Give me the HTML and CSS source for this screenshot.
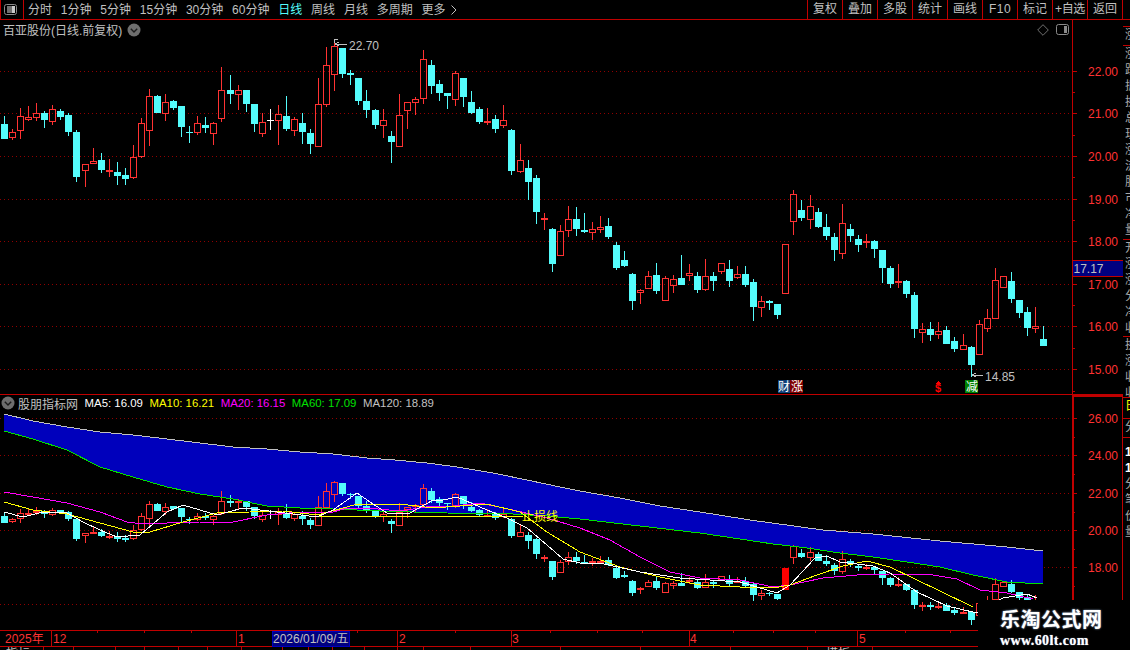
FILE: index.html
```html
<!DOCTYPE html>
<html lang="zh-CN">
<head>
<meta charset="utf-8">
<title>百亚股份 日线</title>
<link rel="stylesheet" href="styles.css">
</head>
<body>
<div class="app">
  <header class="toolbar">
    <button class="tool-toggle" aria-label="切换">
      <svg class="panel-icon" viewBox="0 0 13 12" width="13" height="12"><rect x="0.5" y="0.5" width="12" height="10" rx="2" fill="none" stroke="#8a8a8a"/><rect x="3" y="2" width="5" height="7" fill="#707070"/><rect x="8" y="2" width="3" height="7" fill="#c8c8c8"/></svg>
    </button>
    <nav class="periods">
      <a>分时</a><a>1分钟</a><a>5分钟</a><a>15分钟</a><a>30分钟</a><a>60分钟</a><a class="active">日线</a><a>周线</a><a>月线</a><a>多周期</a>
      <a class="more">更多<svg viewBox="0 0 6 10" width="6" height="10"><path d="M0.5 0.5 5 5 0.5 9.5" fill="none" stroke="#c0c0c0"/></svg></a>
    </nav>
    <div class="actions">
      <a>复权</a><a>叠加</a><a>多股</a><a>统计</a><a>画线</a><a class="latin">F10</a><a>标记</a><a class="tight">+自选</a><a>返回</a>
    </div>
  </header>

  <div class="workspace">
    <div class="charts">
      <section class="panel panel-upper">
        <svg id="upper" class="plot" viewBox="0 20 1123 374" width="1123" height="374" shape-rendering="crispEdges">
          <g id="upper-grid"></g>
          <g id="upper-candles"></g>
          <g class="notes">
            <path class="arrow" d="M334 39h4M334 39v4M335 44h12M335 44l4-2M335 44l4 2"/>
            <text class="note" x="349" y="49.5">22.70</text>
            <path class="arrow" d="M972 375h11M972 375l4-2M972 375l4 2"/>
            <text class="note" x="985" y="380.5">14.85</text>
            <rect class="badge-blue" x="778" y="380" width="12" height="13"/>
            <rect class="badge-red" x="790" y="380" width="13" height="13"/>
            <rect class="badge-green" x="965" y="380" width="13" height="13"/>
            <text class="badge-text" x="778" y="391">财</text>
            <text class="badge-text" x="791" y="391">涨</text>
            <text class="badge-text" x="966" y="391">减</text>
            <path class="dollar-tip" d="M938 381l-3 3h6z"/>
            <text class="dollar" x="935" y="392">$</text>
          </g>
          <g id="upper-axis"></g>
          <rect class="tag" x="1073" y="261" width="50" height="15"/>
          <path class="tag-edge" d="M1072 260.5H1123M1072 276.5H1123"/>
          <text class="tag-text" x="1073.5" y="273">17.17</text>
        </svg>
        <div class="panel-head">
          <div class="panel-title">
            <span>百亚股份(日线.前复权)</span>
            <svg class="chev" viewBox="0 0 14 14" width="14" height="14"><circle cx="7" cy="7" r="6.5" fill="#6e6e6e"/><path d="M3.8 5.8 7 9 10.2 5.8" fill="none" stroke="#1c1c1c" stroke-width="1.4"/></svg>
          </div>
          <div class="panel-tools">
            <svg viewBox="0 0 12 12" width="12" height="12"><path d="M6 0.7 11.3 6 6 11.3 0.7 6z" fill="none" stroke="#707070"/></svg>
            <svg viewBox="0 0 13 12" width="13" height="12"><rect x="0.5" y="0.5" width="12" height="10" rx="2" fill="none" stroke="#8a8a8a"/><rect x="8" y="2" width="3" height="7" fill="#8a8a8a"/></svg>
          </div>
        </div>
      </section>

      <section class="panel panel-lower">
        <svg id="lower" class="plot" viewBox="0 395 1123 235" width="1123" height="235" shape-rendering="crispEdges">
          <g id="lower-grid"></g>
          <polygon id="ma-band" class="band"></polygon>
          <g id="lower-candles"></g>
          <g id="lower-lines"></g>
          <text class="stop-label" x="522" y="520.5">止损线</text>
          <g id="lower-axis"></g>
        </svg>
        <div class="legend">
          <svg class="chev" viewBox="0 0 14 14" width="14" height="14"><circle cx="7" cy="7" r="6.5" fill="#6e6e6e"/><path d="M3.8 5.8 7 9 10.2 5.8" fill="none" stroke="#1c1c1c" stroke-width="1.4"/></svg>
          <span class="legend-name">股朋指标网</span>
          <span class="ma ma5">MA5: 16.09</span>
          <span class="ma ma10">MA10: 16.21</span>
          <span class="ma ma20">MA20: 16.15</span>
          <span class="ma ma60">MA60: 17.09</span>
          <span class="ma ma120">MA120: 18.89</span>
        </div>
      </section>

      <div class="date-axis">
        <svg id="dates" viewBox="0 630 1123 20" width="1123" height="20" shape-rendering="crispEdges">
          <g id="date-ticks"></g>
          <text class="date-label" x="5" y="642.5">2025年</text>
          <text class="date-label" x="53" y="642.5">12</text>
          <text class="date-label" x="238" y="642.5">1</text>
          <rect class="date-box" x="272" y="631" width="77" height="15"/>
          <text class="date-current" x="273" y="642.5">2026/01/09/五</text>
          <text class="date-label" x="399" y="642.5">2</text>
          <text class="date-label" x="512" y="642.5">3</text>
          <text class="date-label" x="690" y="642.5">4</text>
          <text class="date-label" x="859" y="642.5">5</text>
          <text class="date-sub" x="6" y="658">指标</text>
          <text class="date-sub" x="826" y="658">模板</text>
        </svg>
      </div>
    </div>

    <aside class="strip">
      <div class="cell c1"></div>
      <div class="cell c2"><p>涨</p></div>
      <div class="cell c3"><p>涨</p><p>跌</p><p>振</p><p>换</p><p>总</p><p>现</p><p>涨</p><p>流</p><p>股</p><p>市</p><p>净</p><p>量</p></div>
      <div class="cell c4"><p>开</p><p>涨</p><p>涨</p><p>分</p><p>净</p><p>收</p></div>
      <div class="cell c5"><p>换</p><p>涨</p><p>收</p><p>收</p></div>
      <div class="cell c6"><p class="mark">日</p></div>
      <div class="cell c7"><p>分</p></div>
      <div class="cell c8"><p class="bright">1</p><p class="bright">1</p><p>分</p><p>笔</p><p>价</p><p>量</p></div>
    </aside>
  </div>

  <div class="logo">
    <span class="logo-name">乐淘公式网</span>
    <span class="logo-url">www.60lt.com</span>
  </div>
</div>
<script src="chart.js"></script>
</body>
</html>
```

FILE: styles.css
```css
* { box-sizing: border-box; }

html, body {
  margin: 0;
  height: 100%;
  background: #000;
  overflow: hidden;
}

body {
  font-family: "Liberation Sans", "Noto Sans CJK SC", sans-serif;
  font-size: 12px;
  color: #c0c0c0;
}

.app {
  position: relative;
  display: flex;
  flex-direction: column;
  width: 1130px;
  height: 650px;
  overflow: hidden;
}

/* toolbar */
.toolbar {
  display: flex;
  flex: 0 0 20px;
  align-items: stretch;
  border-left: 1px solid #c00000;
  border-bottom: 1px solid #c00000;
}

.tool-toggle {
  display: flex;
  align-items: center;
  justify-content: center;
  width: 23px;
  padding: 0 3px 0 0;
  background: none;
  border: 0;
  border-right: 1px solid #c00000;
}

.periods {
  display: flex;
  align-items: center;
  gap: 8.8px;
  padding-left: 4px;
  flex: 1;
}

.periods a,
.actions a {
  white-space: nowrap;
  line-height: 18px;
}

.periods .active { color: #54fcfc; }

.more {
  display: flex;
  align-items: center;
  gap: 5px;
}

.actions {
  display: flex;
  margin-right: 7px;
  border-left: 1px solid #c00000;
}

.actions a {
  flex: 0 0 35px;
  text-align: center;
  border-right: 1px solid #c00000;
}

.actions .latin { letter-spacing: 0.5px; }
.actions .tight { letter-spacing: -0.3px; }

/* workspace */
.workspace {
  display: flex;
  flex: 1;
  min-height: 0;
}

.charts {
  display: flex;
  flex-direction: column;
  flex: 0 0 1123px;
}

.panel {
  position: relative;
  flex: none;
}

.panel-upper {
  height: 375px;
  border-bottom: 1px solid #c00000;
}

.panel-lower { height: 235px; }

.plot { display: block; }

.panel-head {
  position: absolute;
  top: 1px;
  left: 3px;
  width: 1066px;
  display: flex;
  justify-content: space-between;
  align-items: center;
  height: 17px;
}

.panel-title,
.panel-tools {
  display: flex;
  align-items: center;
}

.panel-title { gap: 5px; }
.panel-tools { gap: 7px; }

.legend {
  position: absolute;
  top: 0;
  left: 1px;
  display: flex;
  align-items: center;
  height: 16px;
  font-size: 11.4px;
}

.legend-name { margin-left: 3px; font-size: 12px; }
.ma { margin-left: 6.6px; white-space: nowrap; }
.ma5 { color: #ffffff; }
.ma10 { color: #ffff00; }
.ma20 { color: #ff00ff; }
.ma60 { color: #00e000; }
.ma120 { color: #c0c0c0; }

.date-axis { flex: 0 0 20px; overflow: hidden; }

/* svg parts */
text { font-family: "Liberation Sans", "Noto Sans CJK SC", sans-serif; font-size: 12px; }

.axis-label { fill: #ff3232; }
.axis-line { stroke: #c00000; fill: none; }
.axis-heavy { stroke: #c00000; stroke-width: 2; fill: none; }
.grid-line { stroke: #900000; stroke-dasharray: 1 3; shape-rendering: auto; }

.candle-up { fill: none; stroke: #ff3232; }
.candle-down { fill: #54fcfc; }
.candle-mark { fill: #ffffff; }
.candle-solid { fill: #ff0000; }
.wick-up { fill: #ff3232; }
.wick-down { fill: #54fcfc; }

.band { fill: #0000bc; }

.ma-line { fill: none; stroke-width: 1; }
.line-ma5 { stroke: #ffffff; }
.line-ma10 { stroke: #ffff00; }
.line-ma20 { stroke: #ff00ff; }
.line-ma60 { stroke: #00e000; }
.line-ma120 { stroke: #c0c0c0; }
.line-stop { stroke: #ffff00; }

.stop-label { fill: #ffff00; }

.note { fill: #c0c0c0; }
.arrow { fill: none; stroke: #c0c0c0; }

.badge-blue { fill: #0f3f78; }
.badge-red { fill: #800000; }
.badge-green { fill: #008000; }
.badge-text { fill: #ffffff; }
.dollar { fill: #ff0000; font-weight: bold; font-size: 11px; }
.dollar-tip { fill: #ff0000; }

.tag { fill: #000080; }
.tag-edge { stroke: #c00000; fill: none; }
.tag-text { fill: #c0c0c0; }

.date-box { fill: #000080; stroke: #0000c0; }
.date-label { fill: #ff3232; }
.date-current { fill: #c0c0c0; font-size: 12px; }
.date-sub { fill: #c0c0c0; }

/* right strip, cut off by the window */
.strip {
  flex: 0 0 7px;
  display: flex;
  flex-direction: column;
  overflow: hidden;
}

.cell {
  flex: none;
  padding-left: 2px;
  border-bottom: 1px solid #c00000;
  overflow: hidden;
}

.cell p {
  margin: 0;
  width: 12px;
  line-height: 16px;
  color: #a8a8a8;
}

.c1 { height: 7px; }
.c2 { height: 19px; }
.c3 { height: 194px; }
.c4 { height: 97px; }
.c5 { height: 61px; }
.c6 { height: 21px; }
.c7 { height: 19px; }
.c8 { height: 212px; border-bottom: 0; padding-top: 6px; }

.cell .mark { color: #ffff00; }
.cell .bright { color: #ffffff; font-weight: bold; }

/* site stamp over the corner of the chart */
.logo {
  position: absolute;
  left: 978px;
  top: 600px;
  width: 152px;
  height: 50px;
  background: #000;
  display: flex;
  flex-direction: column;
  align-items: flex-start;
  padding-left: 22px;
  color: #fff;
}

.logo-name {
  margin-top: 6px;
  font-family: "Noto Sans CJK SC", sans-serif;
  font-weight: 700;
  font-size: 20px;
  line-height: 26px;
  letter-spacing: 0.5px;
  text-shadow: 0 0 2px #9fb8d8;
}

.logo-url {
  margin-top: 1px;
  font-family: "Liberation Serif", serif;
  font-weight: 700;
  font-size: 14px;
  line-height: 15px;
  letter-spacing: 0.4px;
  text-shadow: 0 0 1px #9fb8d8;
}
```

FILE: chart.js
```js
// [high, bodyTop, bodyBottom, low, kind] in page pixels of the upper panel.
// kind: r = rising (hollow red), c = falling (cyan), w = white cross, f = flat red, s = rising, solid in the lower panel
var BARS = [
[116,124,139,139,'c'],[129,132,138,140,'r'],[108,116,131,139,'r'],[106,117,120,121,'r'],[103,113,118,121,'r'],
[111,113,120,128,'c'],[105,109,122,125,'r'],[109,111,117,120,'c'],[113,115,132,136,'c'],[130,132,177,182,'c'],
[164,164,171,187,'r'],[148,161,164,164,'r'],[153,160,170,173,'c'],[159,170,172,177,'f'],[162,172,176,185,'c'],
[168,175,179,185,'c'],[145,157,178,179,'r'],[118,123,157,158,'r'],[89,96,131,146,'r'],[95,96,113,113,'c'],
[94,102,114,121,'r'],[100,101,108,110,'c'],[106,106,127,137,'c'],[126,132,133,143,'c'],[116,123,133,135,'r'],
[117,125,128,133,'c'],[122,123,134,145,'r'],[67,90,119,122,'r'],[75,90,94,104,'c'],[85,90,95,110,'r'],
[90,90,104,112,'c'],[104,104,124,132,'c'],[113,122,134,137,'r'],[109,120,121,130,'w'],[105,114,121,145,'r'],
[96,116,129,131,'c'],[117,119,131,136,'r'],[113,123,132,144,'c'],[129,133,144,154,'c'],[78,104,147,147,'r'],
[47,65,105,107,'r'],[43,46,75,91,'r'],[48,48,74,78,'c'],[70,73,75,85,'c'],[78,78,101,105,'c'],
[90,101,110,118,'c'],[109,110,125,129,'c'],[109,120,126,138,'r'],[131,136,142,163,'c'],[94,115,147,147,'r'],
[102,102,111,129,'r'],[97,99,103,115,'r'],[50,59,99,104,'r'],[60,65,86,94,'c'],[80,84,93,101,'c'],
[93,93,96,109,'c'],[71,73,100,106,'r'],[78,78,97,107,'c'],[91,102,113,114,'c'],[107,109,122,124,'c'],
[108,121,122,125,'f'],[115,119,129,133,'c'],[105,120,126,128,'r'],[129,130,171,175,'c'],[144,160,172,173,'r'],
[160,168,182,200,'c'],[175,178,212,224,'c'],[213,218,220,230,'f'],[228,229,264,272,'c'],[225,231,256,256,'r'],
[206,219,231,237,'r'],[207,219,229,236,'c'],[213,230,232,233,'c'],[222,229,233,240,'r'],[216,227,230,233,'r'],
[218,226,237,239,'c'],[242,245,268,270,'c'],[251,260,266,267,'c'],[273,274,301,310,'c'],[289,290,293,304,'r'],
[271,276,289,289,'r'],[263,275,291,294,'c'],[276,278,301,301,'r'],[275,279,286,293,'r'],[255,278,285,285,'c'],
[264,273,276,281,'r'],[272,276,290,293,'c'],[259,276,290,291,'r'],[272,276,281,291,'c'],[263,263,272,274,'r'],
[260,269,281,287,'c'],[266,274,278,279,'r'],[266,274,285,287,'c'],[279,282,307,321,'c'],[296,301,308,317,'r'],
[300,301,303,310,'c'],[304,304,315,319,'c'],[244,244,294,294,'s'],[190,194,222,235,'r'],[200,210,218,221,'c'],
[195,206,220,229,'r'],[208,212,227,228,'c'],[214,227,236,240,'c'],[233,237,250,261,'c'],[204,223,254,259,'r'],
[224,229,236,242,'c'],[235,239,245,252,'c'],[234,241,243,248,'r'],[240,241,249,258,'c'],[250,250,268,283,'c'],
[266,268,284,288,'c'],[264,281,283,288,'r'],[280,281,294,298,'c'],[292,295,329,338,'c'],[323,329,333,343,'r'],
[322,329,335,341,'c'],[322,331,335,339,'r'],[326,330,344,344,'c'],[337,341,349,352,'c'],[334,345,350,350,'r'],
[346,347,365,377,'c'],[320,324,355,355,'r'],[309,318,329,332,'r'],[268,280,319,319,'r'],[276,276,288,288,'r'],
[272,281,299,303,'c'],[300,300,313,318,'c'],[307,312,328,336,'c'],[307,326,329,333,'r'],[326,339,346,346,'c']
];

var LINES = {
  ma120: [[4,414],[33,421],[67,427],[100,432],[133,435],[167,439],[200,443],[233,447],[267,449],[300,452],[333,454],[367,458],[395,460],[427,463],[457,467],[493,473],[527,480],[560,487],[580,491],[620,498],[660,506],[700,512],[750,520],[823,530],[873,534],[940,541],[1007,547],[1043,551]],
  ma60: [[4,431],[33,439],[67,450],[100,467],[133,477],[167,487],[200,494],[233,499],[267,506],[300,508],[333,509],[380,511],[447,513],[513,514],[547,516],[580,519],[640,526],[700,533],[740,539],[773,544],[807,548],[840,553],[873,557],[907,562],[940,567],[973,575],[1007,582],[1043,584]],
  ma20: [[4,492],[33,497],[67,503],[100,512],[127,522],[143,524],[167,523],[200,522],[233,522],[267,515],[300,512],[333,512],[347,508],[367,508],[400,511],[433,506],[447,507],[480,503],[513,510],[547,518],[580,528],[610,540],[640,557],[670,572],[700,578],[740,580],[773,587],[790,585],[823,578],[857,575],[890,574],[933,575],[957,579],[980,590],[1007,593],[1033,599]],
  ma10: [[4,502],[33,510],[67,514],[100,523],[133,532],[150,532],[183,522],[217,513],[250,512],[283,511],[317,515],[347,507],[357,504],[400,504],[433,508],[487,504],[520,512],[547,532],[580,552],[620,567],[660,577],[700,585],[740,587],[773,588],[790,585],[817,575],[843,566],[867,561],[890,567],[917,580],[940,591],[973,607]],
  ma5: [[4,512],[23,517],[43,512],[67,513],[83,522],[100,530],[117,537],[140,535],[167,512],[183,505],[217,515],[243,508],[277,512],[317,517],[333,510],[357,493],[370,502],[387,513],[410,513],[433,500],[443,500],[457,497],[487,510],[507,518],[527,528],[547,545],[563,559],[580,563],[600,563],[640,572],[680,578],[740,582],[777,593],[790,585],[815,558],[827,556],[840,562],[873,566],[890,573],[917,592],[947,606],[977,613],[1003,598],[1027,594],[1037,598]]
};

var SVG_NS = 'http://www.w3.org/2000/svg';

function el(parent, name, attrs, text) {
  var node = document.createElementNS(SVG_NS, name);
  for (var key in attrs) node.setAttribute(key, attrs[key]);
  if (text) node.textContent = text;
  parent.appendChild(node);
  return node;
}

function barX(i) { return Math.round(4 + 8.055 * i); }

function toLower(y) { return Math.round(482.3 + (y - 46) * 0.4325); }

function drawBars(group, mapY, lower) {
  BARS.forEach(function (b, i) {
    var x = barX(i);
    var high = mapY(b[0]), top = mapY(b[1]), bottom = mapY(b[2]), low = mapY(b[3]), kind = b[4];
    var up = kind === 'r' || kind === 's' || kind === 'f';
    var wick = kind === 'w' ? 'candle-mark' : up ? 'wick-up' : 'wick-down';
    if (kind === 's' && lower) {
      el(group, 'rect', { x: x - 3, y: top, width: 7, height: bottom - top, 'class': 'candle-solid' });
      return;
    }
    if (high < top) el(group, 'rect', { x: x, y: high, width: 1, height: top - high, 'class': wick });
    if (low > bottom) el(group, 'rect', { x: x, y: bottom, width: 1, height: low - bottom, 'class': wick });
    if (up && kind !== 'f') {
      el(group, 'rect', { x: x - 2.5, y: top + 0.5, width: 6, height: Math.max(bottom - top - 1, 1), 'class': 'candle-up' });
    } else if (kind === 'f') {
      el(group, 'rect', { x: x - 3, y: top, width: 7, height: Math.max(bottom - top, 2), 'class': 'wick-up' });
    } else {
      el(group, 'rect', { x: x - 3, y: top, width: 7, height: Math.max(bottom - top, 1), 'class': kind === 'w' ? 'candle-mark' : 'candle-down' });
    }
  });
}

function drawScale(gridId, axisId, rows, topY, bottomY, halfStep) {
  var grid = document.getElementById(gridId);
  var axis = document.getElementById(axisId);
  el(axis, 'path', { d: 'M1072.5 ' + topY + 'V' + bottomY, 'class': 'axis-line' });
  rows.forEach(function (row, i) {
    var y = Math.round(row[1]);
    el(grid, 'line', { x1: 0, x2: 1072, y1: y + 0.5, y2: y + 0.5, 'class': 'grid-line' });
    el(axis, 'path', { d: 'M1072 ' + (y + 0.5) + 'h5', 'class': 'axis-line' });
    // a row with no text sits behind the site stamp
    if (row[0]) el(axis, 'text', { x: 1088, y: y + 5, 'class': 'axis-label' }, row[0]);
    if (i < rows.length - 1 || halfStep) {
      var next = i < rows.length - 1 ? rows[i + 1][1] : row[1] + halfStep * 2;
      var half = Math.round((row[1] + next) / 2);
      if (half < bottomY) el(axis, 'path', { d: 'M1072 ' + (half + 0.5) + 'h3', 'class': 'axis-line' });
    }
  });
}

function drawLine(group, name, pts) {
  el(group, 'polyline', { points: pts.join(' '), 'class': 'ma-line line-' + name });
}

function drawDateTicks() {
  var g = document.getElementById('date-ticks');
  el(g, 'path', { d: 'M0 630.5H1123M0 646.5H1123', 'class': 'axis-line' });
  [51, 236, 397, 511, 689, 857].forEach(function (x) {
    el(g, 'path', { d: 'M' + (x + 0.5) + ' 630V646', 'class': 'axis-line' });
  });
  [97, 144, 191, 282, 308, 332, 357, 455, 550, 597, 642, 733, 773, 815, 905, 950, 995, 1040].forEach(function (x) {
    el(g, 'path', { d: 'M' + (x + 0.5) + ' 631v2', 'class': 'axis-line' });
  });
  [43, 73, 115, 144, 178, 207, 241, 282, 308, 332, 364, 397, 423, 470, 560, 640, 730, 807, 840, 872].forEach(function (x) {
    el(g, 'path', { d: 'M' + (x + 0.5) + ' 646V650', 'class': 'axis-line' });
  });
  el(g, 'path', { d: 'M1072.5 630V650', 'class': 'axis-heavy' });
}

function init() {
  drawScale('upper-grid', 'upper-axis', [
    ['22.00', 70.5], ['21.00', 113.3], ['20.00', 156], ['19.00', 198.6],
    ['18.00', 241.3], ['17.00', 283.8], ['16.00', 326.4], ['15.00', 369.2]
  ], 20, 394, 21.4);

  var lowerRows = [['26.00', 418], ['24.00', 455], ['22.00', 493], ['20.00', 530], ['18.00', 567], ['', 604]];
  drawScale('lower-grid', 'lower-axis', lowerRows, 395, 630, 9);
  el(document.getElementById('lower-axis'), 'path', {
    d: 'M1072 395.5H1123', 'class': 'axis-heavy'
  });
  el(document.getElementById('lower-axis'), 'path', {
    d: 'M1073 395V630', 'class': 'axis-heavy'
  });
  el(document.getElementById('lower-axis'), 'path', {
    d: 'M1123 395V630', 'class': 'axis-heavy'
  });

  drawBars(document.getElementById('upper-candles'), function (y) { return y; }, false);
  drawBars(document.getElementById('lower-candles'), toLower, true);

  var band = LINES.ma120.concat(LINES.ma60.slice().reverse());
  document.getElementById('ma-band').setAttribute('points', band.join(' '));

  var lines = document.getElementById('lower-lines');
  el(lines, 'polyline', { points: '313,516 523,516', 'class': 'ma-line line-stop' });
  ['ma120', 'ma60', 'ma20', 'ma10', 'ma5'].forEach(function (name) {
    drawLine(lines, name, LINES[name]);
  });

  drawDateTicks();
}

init();
```
